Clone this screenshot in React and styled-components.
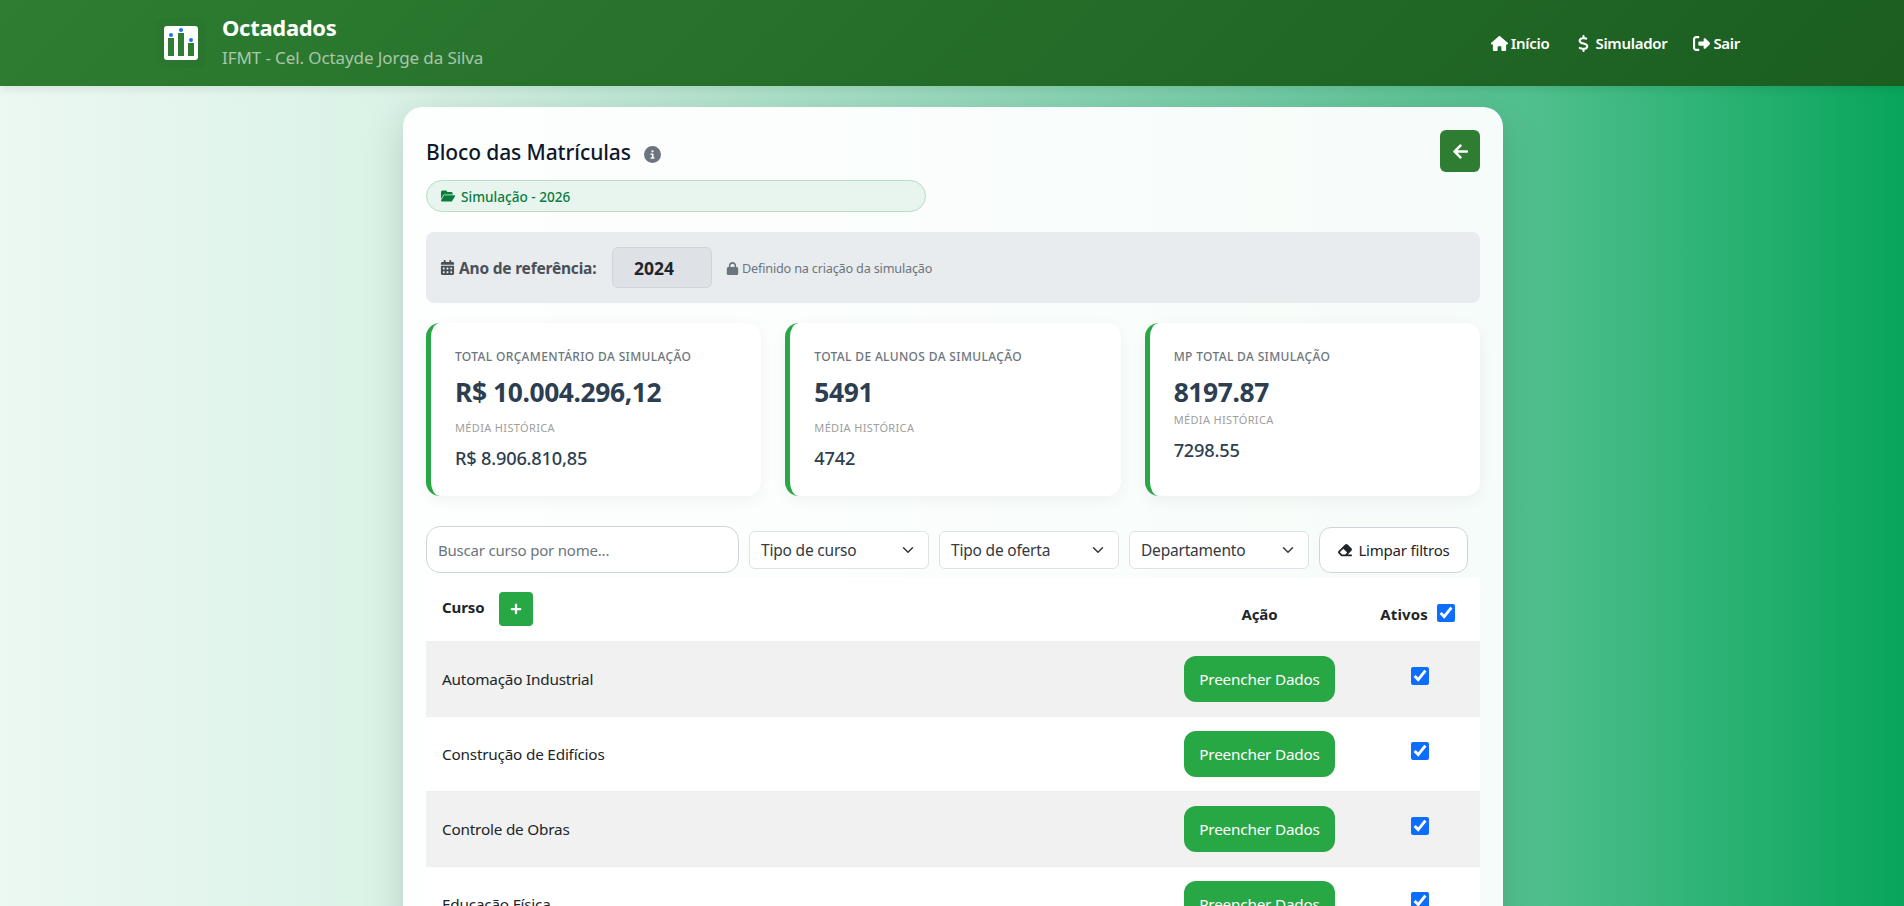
import React from 'react';
import styled, { createGlobalStyle } from 'styled-components';
import { FaArrowLeft, FaPlus } from 'react-icons/fa';
import {
  FaHouse, FaDollarSign, FaRightFromBracket, FaCircleInfo, FaFolderOpen,
  FaCalendarDays, FaLock, FaEraser,
} from 'react-icons/fa6';

const GlobalStyle = createGlobalStyle`
  * { box-sizing: border-box; }
  html, body { margin: 0; padding: 0; }
  body {
    min-height: 100vh;
    font-family: "Noto Sans", "Open Sans", sans-serif;
    color: #212529;
    background: linear-gradient(90deg, #ecf8f2 0%, #d9f2e6 22%, #52c08f 80%, #08a55b 100%) fixed;
  }
  svg { width: auto; height: 1em; }
`;

const Header = styled.header`
  height: 86px;
  padding: 0 164px 0 156px;
  display: flex;
  align-items: center;
  justify-content: space-between;
  color: #fff;
  background: linear-gradient(135deg, #2e7d32, #1b5e20);
  box-shadow: 0 2px 10px rgba(0, 0, 0, 0.1);
`;

const Brand = styled.div`
  display: flex;
  align-items: center;
  gap: 16px;
`;

const LogoBox = styled.div`
  width: 50px;
  height: 50px;
  display: flex;
  align-items: center;
  justify-content: center;
  border-radius: 8px;
  background: rgba(0, 0, 0, 0.02);
  svg { width: 34px; height: 34px; }
`;

const BrandText = styled.div`
  display: flex;
  flex-direction: column;
  gap: 7px;
  margin-top: -3px;
`;

const BrandName = styled.span`
  font-size: 22px;
  font-weight: 700;
  line-height: 26px;
  letter-spacing: -0.3px;
`;

const BrandSub = styled.span`
  font-size: 17px;
  line-height: 22px;
  letter-spacing: -0.1px;
  color: rgba(255, 255, 255, 0.6);
`;

const Nav = styled.nav`
  display: flex;
  align-items: center;
  gap: 26px;
`;

const NavLink = styled.a`
  display: flex;
  align-items: center;
  gap: 3px;
  color: #fff;
  font-size: 15px;
  font-weight: 600;
  letter-spacing: -0.3px;
  svg { font-size: 17px; }
`;

const Main = styled.div`
  padding-left: 2px;
`;

const Card = styled.main`
  position: relative;
  width: 1100px;
  margin: 21px auto 0;
  padding: 23px 23px 0;
  border-radius: 20px 20px 0 0;
  background: rgba(255, 255, 255, 0.95);
  box-shadow: 0 10px 40px rgba(0, 0, 0, 0.15);
`;

const TitleRow = styled.div`
  display: flex;
  align-items: center;
  justify-content: space-between;
  height: 42px;
`;

const Title = styled.h1`
  display: flex;
  align-items: center;
  gap: 13px;
  margin: 2px 0 0;
  font-size: 21px;
  font-weight: 500;
  letter-spacing: -0.1px;
  color: #0f172a;
  svg { font-size: 17px; color: #6c757d; margin-top: 4px; }
`;

const BackButton = styled.button`
  width: 40px;
  height: 42px;
  display: flex;
  align-items: center;
  justify-content: center;
  border: 0;
  border-radius: 6px;
  color: #fff;
  font-size: 17px;
  background: #2e7d32;
`;

const SimPill = styled.div`
  width: 500px;
  height: 32px;
  margin-top: 8px;
  padding: 0 14px;
  display: flex;
  align-items: center;
  gap: 6px;
  border: 1px solid #b5dcc5;
  border-radius: 16px;
  background: #e8f5ee;
  color: #0a7d3e;
  font-size: 13.6px;
  font-weight: 500;
  svg { font-size: 14px; }
`;

const YearBar = styled.div`
  height: 71px;
  margin-top: 20px;
  padding: 0 14px;
  display: flex;
  align-items: center;
  border-radius: 8px;
  background: #e9ecef;
`;

const YearLabel = styled.label`
  display: flex;
  align-items: center;
  gap: 4px;
  width: 172px;
  font-size: 15.5px;
  font-weight: 700;
  letter-spacing: -0.2px;
  color: #495057;
  svg { font-size: 15px; }
`;

const YearValue = styled.div`
  width: 100px;
  height: 41px;
  padding-left: 21px;
  display: flex;
  align-items: center;
  border: 1px solid #ced4da;
  border-radius: 6px;
  background: #dee2e6;
  font-size: 17.5px;
  font-weight: 700;
`;

const YearHint = styled.small`
  display: flex;
  align-items: center;
  gap: 3px;
  margin: 1px 0 0 14px;
  font-size: 12.7px;
  letter-spacing: -0.2px;
  color: #6c757d;
  svg { font-size: 13px; }
`;

const Stats = styled.section`
  display: grid;
  grid-template-columns: repeat(3, 1fr);
  gap: 24px;
  margin-top: 20px;
`;

const StatCard = styled.div`
  height: 173px;
  padding: 25px 24px 0;
  border-left: 5px solid #28a745;
  border-radius: 14px;
  background: #fff;
  box-shadow: 0 4px 15px rgba(0, 0, 0, 0.05);
`;

const StatLabel = styled.div`
  font-size: 12px;
  font-weight: 500;
  line-height: 18px;
  letter-spacing: 0.35px;
  color: #6c757d;
`;

const StatValue = styled.div`
  margin-top: 8px;
  font-size: 26.4px;
  line-height: 36px;
  font-weight: 700;
  letter-spacing: -0.4px;
  color: #2c3e50;
`;

const AvgLabel = styled.div`
  margin-top: ${(p) => (p.$tight ? '2px' : '10px')};
  font-size: 11px;
  line-height: 16px;
  letter-spacing: 0.35px;
  color: #9e9e9e;
`;

const AvgValue = styled.div`
  margin-top: 9px;
  font-size: 18.2px;
  line-height: 26px;
  font-weight: 500;
  letter-spacing: -0.2px;
  color: #2c3e50;
`;

const Filters = styled.div`
  display: flex;
  align-items: center;
  gap: 10px;
  margin-top: 30px;
  height: 47px;
`;

const Search = styled.input`
  width: 313px;
  height: 47px;
  padding: 0 11px;
  border: 1px solid #ced4da;
  border-radius: 14px;
  font: inherit;
  font-size: 15px;
  letter-spacing: -0.2px;
  background: #fff;
  &::placeholder { color: #6c757d; }
`;

const Select = styled.div`
  width: 180px;
  height: 38px;
  padding: 0 14px 0 11px;
  display: flex;
  align-items: center;
  justify-content: space-between;
  border: 1px solid #dee2e6;
  border-radius: 6px;
  background: #fff;
  font-size: 15.5px;
  letter-spacing: -0.2px;
  color: #343a40;
`;

const ClearButton = styled.button`
  width: 149px;
  height: 46px;
  display: flex;
  align-items: center;
  justify-content: center;
  gap: 5px;
  border: 1px solid #ced4da;
  border-radius: 12px;
  background: #fff;
  font: inherit;
  font-size: 15px;
  letter-spacing: -0.2px;
  color: #212529;
  svg { font-size: 16px; }
`;

const Table = styled.table`
  width: 100%;
  margin-top: 5px;
  border-collapse: collapse;
  table-layout: fixed;
  background: #fff;
`;

const HeadCell = styled.th`
  height: 63px;
  padding: ${(p) => (p.$low ? '10px 16px 0' : '0 16px')};
  font-size: 15px;
  font-weight: 700;
  text-align: ${(p) => p.$align || 'center'};
  letter-spacing: -0.1px;
`;

const CursoHead = styled.div`
  display: flex;
  align-items: center;
  gap: 14px;
`;

const CursoLabel = styled.span`
  margin-top: -4px;
`;

const AddButton = styled.button`
  width: 34px;
  height: 34px;
  display: flex;
  align-items: center;
  justify-content: center;
  border: 0;
  border-radius: 4px;
  color: #fff;
  font-size: 12px;
  background: #28a745;
`;

const AtivosHead = styled.div`
  display: flex;
  align-items: center;
  justify-content: flex-end;
  gap: 9px;
  margin-right: 9px;
  letter-spacing: 0.15px;
`;

const Row = styled.tr`
  height: 75px;
  border-top: 1px solid #eceeef;
  background: ${(p) => (p.$odd ? '#f1f1f1' : '#fff')};
`;

const Cell = styled.td`
  padding: ${(p) => (p.$shift ? '0 16px 0 24px' : '0 16px')};
  font-size: 15.3px;
  letter-spacing: -0.2px;
  text-align: ${(p) => p.$align || 'left'};
`;

const FillButton = styled.button`
  width: 151px;
  height: 46px;
  border: 0;
  border-radius: 12px;
  background: #28a745;
  color: #fff;
  font: inherit;
  font-size: 15.3px;
  letter-spacing: -0.2px;
`;

const Check = styled.input.attrs({ type: 'checkbox', defaultChecked: true })`
  width: 18px;
  height: 18px;
  margin: 0;
  accent-color: #0d6efd;
  position: relative;
  top: -1px;
`;

const Chevron = () => (
  <svg style={{ width: 12, height: 12 }} viewBox="0 0 16 16" fill="none" stroke="#343a40" strokeWidth="2" strokeLinecap="round" strokeLinejoin="round">
    <path d="m2 5 6 6 6-6" />
  </svg>
);

const Logo = () => (
  <svg viewBox="0 0 34 34">
    <rect width="34" height="34" rx="3" fill="#fff" />
    <rect x="4" y="12" width="6" height="18" fill="#2e7d32" />
    <rect x="14" y="7" width="6" height="23" fill="#2e7d32" />
    <rect x="24" y="17" width="6" height="13" fill="#2e7d32" />
    <circle cx="7" cy="9" r="2" fill="#1a73e8" />
    <circle cx="17" cy="4" r="2" fill="#1a73e8" />
    <circle cx="27" cy="14" r="2" fill="#1a73e8" />
  </svg>
);

const stats = [
  { label: 'TOTAL ORÇAMENTÁRIO DA SIMULAÇÃO', value: 'R$ 10.004.296,12', avg: 'R$ 8.906.810,85' },
  { label: 'TOTAL DE ALUNOS DA SIMULAÇÃO', value: '5491', avg: '4742' },
  { label: 'MP TOTAL DA SIMULAÇÃO', value: '8197.87', avg: '7298.55', tight: true },
];

const cursos = ['Automação Industrial', 'Construção de Edifícios', 'Controle de Obras', 'Educação Física'];

export default function App() {
  return (
    <>
      <GlobalStyle />
      <Header>
        <Brand>
          <LogoBox><Logo /></LogoBox>
          <BrandText>
            <BrandName>Octadados</BrandName>
            <BrandSub>IFMT - Cel. Octayde Jorge da Silva</BrandSub>
          </BrandText>
        </Brand>
        <Nav>
          <NavLink><FaHouse /> Início</NavLink>
          <NavLink><FaDollarSign /> Simulador</NavLink>
          <NavLink><FaRightFromBracket /> Sair</NavLink>
        </Nav>
      </Header>

      <Main>
        <Card>
          <TitleRow>
            <Title>Bloco das Matrículas <FaCircleInfo /></Title>
            <BackButton><FaArrowLeft /></BackButton>
          </TitleRow>
          <SimPill><FaFolderOpen /> Simulação - 2026</SimPill>

          <YearBar>
            <YearLabel><FaCalendarDays /> Ano de referência:</YearLabel>
            <YearValue>2024</YearValue>
            <YearHint><FaLock /> Definido na criação da simulação</YearHint>
          </YearBar>

          <Stats>
            {stats.map((s) => (
              <StatCard key={s.label}>
                <StatLabel>{s.label}</StatLabel>
                <StatValue>{s.value}</StatValue>
                <AvgLabel $tight={s.tight}>MÉDIA HISTÓRICA</AvgLabel>
                <AvgValue>{s.avg}</AvgValue>
              </StatCard>
            ))}
          </Stats>

          <Filters>
            <Search placeholder="Buscar curso por nome..." />
            <Select>Tipo de curso <Chevron /></Select>
            <Select>Tipo de oferta <Chevron /></Select>
            <Select>Departamento <Chevron /></Select>
            <ClearButton><FaEraser /> Limpar filtros</ClearButton>
          </Filters>

          <Table>
            <colgroup>
              <col />
              <col style={{ width: 183 }} />
              <col style={{ width: 129 }} />
            </colgroup>
            <thead>
              <tr>
                <HeadCell $align="left">
                  <CursoHead><CursoLabel>Curso</CursoLabel> <AddButton><FaPlus /></AddButton></CursoHead>
                </HeadCell>
                <HeadCell $low>Ação</HeadCell>
                <HeadCell $low>
                  <AtivosHead>Ativos <Check /></AtivosHead>
                </HeadCell>
              </tr>
            </thead>
            <tbody>
              {cursos.map((c, i) => (
                <Row key={c} $odd={i % 2 === 0}>
                  <Cell>{c}</Cell>
                  <Cell $align="center"><FillButton>Preencher Dados</FillButton></Cell>
                  <Cell $align="center" $shift><Check /></Cell>
                </Row>
              ))}
            </tbody>
          </Table>
        </Card>
      </Main>
    </>
  );
}
